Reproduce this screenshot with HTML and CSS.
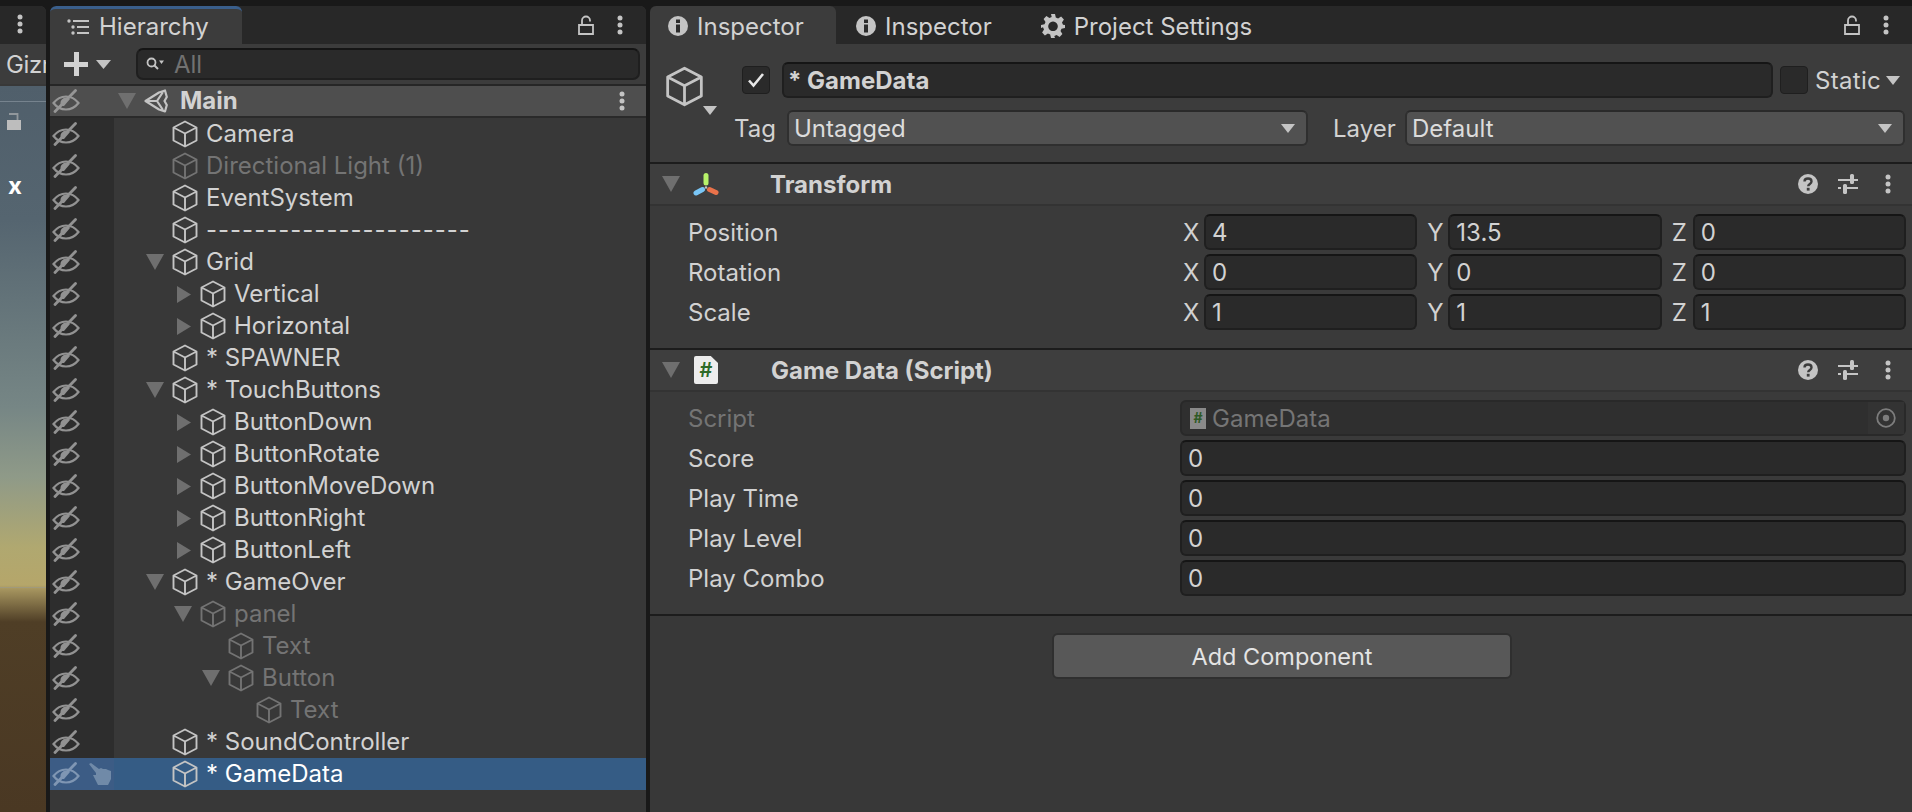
FILE: index.html
```html
<!DOCTYPE html>
<html lang="en">
<head>
<meta charset="utf-8">
<title>Unity Editor</title>
<link rel="stylesheet" href="styles.css">
</head>
<body>
<svg class="defs" width="0" height="0" aria-hidden="true">
  <symbol id="cube" viewBox="0 0 26 28"><path d="M13 1.500 24.500 7.500V20.500L13 26.500 1.500 20.500V7.500ZM1.500 7.500 13 13.500 24.500 7.500M13 13.500V26.500" fill="none" stroke="currentColor" stroke-width="1.900" stroke-linejoin="round"/></symbol>
  <symbol id="eye" viewBox="0 0 28 24"><path d="M1.500 14C5 9.500 9 7.500 14 7.500S23 9.500 26.500 14C23 18.500 19 20.500 14 20.500S5 18.500 1.500 14Z" fill="none" stroke="currentColor" stroke-width="2.200"/><path d="M15 8.500a5.500 5.500 0 0 0-5.500 8.500L12 17 18 10Z" fill="currentColor"/><path d="M3 22.500 23.500 1.500" stroke="currentColor" stroke-width="2.800" stroke-linecap="round"/></symbol>
  <symbol id="dots" viewBox="0 0 6 20"><circle cx="3" cy="3" r="2.500" fill="currentColor"/><circle cx="3" cy="10" r="2.500" fill="currentColor"/><circle cx="3" cy="17" r="2.500" fill="currentColor"/></symbol>
  <symbol id="lock" viewBox="0 0 16 20"><path d="M1 10h14v9H1ZM4 10V5.500C4 3 6 1.500 8 1.500S12 3 12 5.500V6.500" fill="none" stroke="currentColor" stroke-width="1.800"/></symbol>
  <symbol id="lock-solid" viewBox="0 0 14 18"><rect x="0" y="8" width="14" height="10" fill="currentColor"/><path d="M2 2H10.500V8" fill="none" stroke="currentColor" stroke-opacity="0.600" stroke-width="1.800"/></symbol>
  <symbol id="info" viewBox="0 0 20 20"><circle cx="10" cy="10" r="10" fill="currentColor"/><rect x="8" y="8.500" width="4" height="8" fill="#2b2b2b"/><rect x="8" y="3.500" width="4" height="3.500" fill="#2b2b2b"/></symbol>
  <symbol id="help" viewBox="0 0 20 20"><circle cx="10" cy="10" r="10" fill="currentColor"/><path d="M6.500 7.500C6.500 5.500 8 4.500 10 4.500S13.500 5.500 13.500 7.500C13.500 10 10.200 9.800 10.200 12.300" fill="none" stroke="#3c3c3c" stroke-width="2.400"/><rect x="8.800" y="13.800" width="2.800" height="2.800" fill="#3c3c3c"/></symbol>
  <symbol id="sliders" viewBox="0 0 20 20"><path d="M0 6H12M16 6H20M0 14H3M8 14H20" stroke="currentColor" stroke-width="2"/><rect x="12" y="0" width="4" height="10" rx="1.500" fill="currentColor"/><rect x="6" y="10" width="4" height="10" rx="1.500" fill="currentColor" transform="translate(-1)"/></symbol>
  <symbol id="gear" viewBox="0 0 24 24"><path d="M10 0h4l.8 3.500 2.300 1 3-1.900 2.800 2.800-1.900 3 1 2.300L24 11v3l-3.500.8-1 2.300 1.900 3-2.800 2.800-3-1.900-2.300 1L14 24h-4l-.8-3.500-2.300-1-3 1.900-2.800-2.800 1.900-3-1-2.300L0 14v-3l3.500-.8 1-2.300-1.900-3 2.800-2.800 3 1.900 2.300-1ZM12 7.500a4.800 4.800 0 1 0 .01 0Z" fill="currentColor" fill-rule="evenodd"/></symbol>
  <symbol id="unity" viewBox="0 0 24 24"><path d="M1.500 12 15 3.500 21 1.500 22.800 8 20.500 12 22.800 16 21 22.500 15 20.500ZM1.500 12H13M13 12 19 3M13 12 19 21" fill="none" stroke="currentColor" stroke-width="2.200" stroke-linejoin="round"/></symbol>
  <symbol id="down" viewBox="0 0 18 16" preserveAspectRatio="none"><path d="M0 0H18L9 16Z" fill="currentColor"/></symbol>
  <symbol id="right" viewBox="0 0 16 18" preserveAspectRatio="none"><path d="M0 0V18L16 9Z" fill="currentColor"/></symbol>
  <symbol id="hand" viewBox="0 0 24 24"><path d="M1 2 3 1 11 7 13 6 15 7 18 7 20 8 23 9 23 17 20 23 10 23 8 19 5 13 8 13V11Z" fill="currentColor"/></symbol>
  <symbol id="transform" viewBox="0 0 26 23"><path d="M13 2.500V10" stroke="#b7f26a" stroke-width="5" stroke-linecap="round"/><path d="M3 20 9.500 16.500" stroke="#79c6f6" stroke-width="5" stroke-linecap="round"/><path d="M16.500 16.500 23 19.500" stroke="#e9724a" stroke-width="5" stroke-linecap="round"/><circle cx="13" cy="14.500" r="1.200" fill="#c4c4c4"/></symbol>
  <symbol id="target" viewBox="0 0 20 20"><circle cx="10" cy="10" r="8.800" fill="none" stroke="currentColor" stroke-width="1.800"/><circle cx="10" cy="10" r="3.200" fill="currentColor"/></symbol>
  <symbol id="search" viewBox="0 0 18 14"><circle cx="5.500" cy="5.500" r="4" fill="none" stroke="currentColor" stroke-width="1.800"/><path d="M8.500 8.500 12 12" stroke="currentColor" stroke-width="2"/><path d="M13 3.500H18L15.500 7Z" fill="currentColor"/></symbol>
  <symbol id="list" viewBox="0 0 22 16"><circle cx="2" cy="2" r="1.700" fill="currentColor"/><circle cx="6" cy="8" r="1.700" fill="currentColor"/><circle cx="6" cy="14" r="1.700" fill="currentColor"/><path d="M6 2H22M10 8H22M10 14H22" stroke="currentColor" stroke-width="2"/></symbol>
  <symbol id="tick" viewBox="0 0 18 16"><path d="M2 8.500 6.500 13.500 16 2" fill="none" stroke="currentColor" stroke-width="2.600"/></symbol>
</svg>

<div class="editor">
  <section class="panel scene-panel">
    <div class="tabbar tabbar-scene"><svg class="ic-dots"><use href="#dots"/></svg></div>
    <div class="toolbar scene-toolbar"><span class="gizmos">Gizmos</span></div>
    <div class="scene">
      <div class="scene-strip"></div>
      <svg class="scene-lock"><use href="#lock-solid"/></svg>
      <span class="scene-x">x</span>
      <div class="scene-horizon"></div>
    </div>
  </section>

  <section class="panel hierarchy">
    <div class="tabbar">
      <div class="tab tab-hierarchy"><svg class="ic-list"><use href="#list"/></svg><span>Hierarchy</span></div>
      <div class="tab-actions"><svg class="ic-lock"><use href="#lock"/></svg><svg class="ic-dots"><use href="#dots"/></svg></div>
    </div>
    <div class="toolbar hier-toolbar">
      <span class="plus"></span>
      <svg class="ic-caret"><use href="#down"/></svg>
      <div class="search"><svg class="ic-search"><use href="#search"/></svg><span>All</span></div>
    </div>
    <div class="rows">
      <div class="row row-scene"><div class="gutter"><svg class="eye"><use href="#eye"/></svg></div><div class="item d0"><svg class="arrow"><use href="#down"/></svg><svg class="cube"><use href="#unity"/></svg><span class="name name-scene">Main</span><svg class="row-dots"><use href="#dots"/></svg></div></div>
      <div class="row"><div class="gutter"><svg class="eye"><use href="#eye"/></svg></div><div class="item d1"><span class="noarrow"></span><svg class="cube"><use href="#cube"/></svg><span class="name">Camera</span></div></div>
      <div class="row off"><div class="gutter"><svg class="eye"><use href="#eye"/></svg></div><div class="item d1"><span class="noarrow"></span><svg class="cube"><use href="#cube"/></svg><span class="name">Directional Light (1)</span></div></div>
      <div class="row"><div class="gutter"><svg class="eye"><use href="#eye"/></svg></div><div class="item d1"><span class="noarrow"></span><svg class="cube"><use href="#cube"/></svg><span class="name">EventSystem</span></div></div>
      <div class="row"><div class="gutter"><svg class="eye"><use href="#eye"/></svg></div><div class="item d1"><span class="noarrow"></span><svg class="cube"><use href="#cube"/></svg><span class="name name-rule">----------------------</span></div></div>
      <div class="row"><div class="gutter"><svg class="eye"><use href="#eye"/></svg></div><div class="item d1"><svg class="arrow"><use href="#down"/></svg><svg class="cube"><use href="#cube"/></svg><span class="name">Grid</span></div></div>
      <div class="row"><div class="gutter"><svg class="eye"><use href="#eye"/></svg></div><div class="item d2"><svg class="arrow closed"><use href="#right"/></svg><svg class="cube"><use href="#cube"/></svg><span class="name">Vertical</span></div></div>
      <div class="row"><div class="gutter"><svg class="eye"><use href="#eye"/></svg></div><div class="item d2"><svg class="arrow closed"><use href="#right"/></svg><svg class="cube"><use href="#cube"/></svg><span class="name">Horizontal</span></div></div>
      <div class="row"><div class="gutter"><svg class="eye"><use href="#eye"/></svg></div><div class="item d1"><span class="noarrow"></span><svg class="cube"><use href="#cube"/></svg><span class="name">* SPAWNER</span></div></div>
      <div class="row"><div class="gutter"><svg class="eye"><use href="#eye"/></svg></div><div class="item d1"><svg class="arrow"><use href="#down"/></svg><svg class="cube"><use href="#cube"/></svg><span class="name">* TouchButtons</span></div></div>
      <div class="row"><div class="gutter"><svg class="eye"><use href="#eye"/></svg></div><div class="item d2"><svg class="arrow closed"><use href="#right"/></svg><svg class="cube"><use href="#cube"/></svg><span class="name">ButtonDown</span></div></div>
      <div class="row"><div class="gutter"><svg class="eye"><use href="#eye"/></svg></div><div class="item d2"><svg class="arrow closed"><use href="#right"/></svg><svg class="cube"><use href="#cube"/></svg><span class="name">ButtonRotate</span></div></div>
      <div class="row"><div class="gutter"><svg class="eye"><use href="#eye"/></svg></div><div class="item d2"><svg class="arrow closed"><use href="#right"/></svg><svg class="cube"><use href="#cube"/></svg><span class="name">ButtonMoveDown</span></div></div>
      <div class="row"><div class="gutter"><svg class="eye"><use href="#eye"/></svg></div><div class="item d2"><svg class="arrow closed"><use href="#right"/></svg><svg class="cube"><use href="#cube"/></svg><span class="name">ButtonRight</span></div></div>
      <div class="row"><div class="gutter"><svg class="eye"><use href="#eye"/></svg></div><div class="item d2"><svg class="arrow closed"><use href="#right"/></svg><svg class="cube"><use href="#cube"/></svg><span class="name">ButtonLeft</span></div></div>
      <div class="row"><div class="gutter"><svg class="eye"><use href="#eye"/></svg></div><div class="item d1"><svg class="arrow"><use href="#down"/></svg><svg class="cube"><use href="#cube"/></svg><span class="name">* GameOver</span></div></div>
      <div class="row off"><div class="gutter"><svg class="eye"><use href="#eye"/></svg></div><div class="item d2"><svg class="arrow"><use href="#down"/></svg><svg class="cube"><use href="#cube"/></svg><span class="name">panel</span></div></div>
      <div class="row off"><div class="gutter"><svg class="eye"><use href="#eye"/></svg></div><div class="item d3"><span class="noarrow"></span><svg class="cube"><use href="#cube"/></svg><span class="name">Text</span></div></div>
      <div class="row off"><div class="gutter"><svg class="eye"><use href="#eye"/></svg></div><div class="item d3"><svg class="arrow"><use href="#down"/></svg><svg class="cube"><use href="#cube"/></svg><span class="name">Button</span></div></div>
      <div class="row off"><div class="gutter"><svg class="eye"><use href="#eye"/></svg></div><div class="item d4"><span class="noarrow"></span><svg class="cube"><use href="#cube"/></svg><span class="name">Text</span></div></div>
      <div class="row"><div class="gutter"><svg class="eye"><use href="#eye"/></svg></div><div class="item d1"><span class="noarrow"></span><svg class="cube"><use href="#cube"/></svg><span class="name">* SoundController</span></div></div>
      <div class="row selected"><div class="gutter"><svg class="eye"><use href="#eye"/></svg><svg class="hand"><use href="#hand"/></svg></div><div class="item d1"><span class="noarrow"></span><svg class="cube"><use href="#cube"/></svg><span class="name">* GameData</span></div></div>
    </div>
  </section>

  <section class="panel inspector">
    <div class="tabbar">
      <div class="tab tab-inspector"><svg class="ic-info"><use href="#info"/></svg><span>Inspector</span></div>
      <div class="tab tab-plain"><svg class="ic-info"><use href="#info"/></svg><span>Inspector</span></div>
      <div class="tab tab-plain tab-settings"><svg class="ic-gear"><use href="#gear"/></svg><span>Project Settings</span></div>
      <div class="tab-actions"><svg class="ic-lock"><use href="#lock"/></svg><svg class="ic-dots"><use href="#dots"/></svg></div>
    </div>

    <div class="object-head">
      <div class="object-icon"><svg class="object-cube"><use href="#cube"/></svg><svg class="object-caret"><use href="#down"/></svg></div>
      <div class="object-fields">
        <div class="object-line">
          <span class="check"><svg class="ic-tick"><use href="#tick"/></svg></span>
          <div class="name-field">* GameData</div>
          <span class="check static-check"></span>
          <span class="static-label">Static</span>
          <svg class="static-caret"><use href="#down"/></svg>
        </div>
        <div class="object-line tag-line">
          <span class="tag-label">Tag</span>
          <div class="dropdown tag-drop"><span>Untagged</span><svg class="drop-caret"><use href="#down"/></svg></div>
          <span class="layer-label">Layer</span>
          <div class="dropdown layer-drop"><span>Default</span><svg class="drop-caret"><use href="#down"/></svg></div>
        </div>
      </div>
    </div>

    <div class="comp-head">
      <svg class="arrow comp-arrow"><use href="#down"/></svg>
      <svg class="comp-icon"><use href="#transform"/></svg>
      <span class="comp-title">Transform</span>
      <div class="comp-actions"><svg class="ic-help"><use href="#help"/></svg><svg class="ic-sliders"><use href="#sliders"/></svg><svg class="ic-dots"><use href="#dots"/></svg></div>
    </div>
    <div class="comp-body">
      <div class="prop">
        <span class="prop-label">Position</span>
        <div class="vector">
          <div class="axis"><span>X</span><div class="field">4</div></div>
          <div class="axis"><span>Y</span><div class="field">13.5</div></div>
          <div class="axis"><span>Z</span><div class="field">0</div></div>
        </div>
      </div>
      <div class="prop">
        <span class="prop-label">Rotation</span>
        <div class="vector">
          <div class="axis"><span>X</span><div class="field">0</div></div>
          <div class="axis"><span>Y</span><div class="field">0</div></div>
          <div class="axis"><span>Z</span><div class="field">0</div></div>
        </div>
      </div>
      <div class="prop">
        <span class="prop-label">Scale</span>
        <div class="vector">
          <div class="axis"><span>X</span><div class="field">1</div></div>
          <div class="axis"><span>Y</span><div class="field">1</div></div>
          <div class="axis"><span>Z</span><div class="field">1</div></div>
        </div>
      </div>
    </div>

    <div class="comp-head">
      <svg class="arrow comp-arrow"><use href="#down"/></svg>
      <span class="script-icon"><span>#</span></span>
      <span class="comp-title comp-title-script">Game Data (Script)</span>
      <div class="comp-actions"><svg class="ic-help"><use href="#help"/></svg><svg class="ic-sliders"><use href="#sliders"/></svg><svg class="ic-dots"><use href="#dots"/></svg></div>
    </div>
    <div class="comp-body">
      <div class="prop prop-off">
        <span class="prop-label">Script</span>
        <div class="field field-wide field-ref"><span class="script-mini"><span>#</span></span><span class="ref-name">GameData</span><span class="ref-target"><svg class="ic-target"><use href="#target"/></svg></span></div>
      </div>
      <div class="prop"><span class="prop-label">Score</span><div class="field field-wide">0</div></div>
      <div class="prop"><span class="prop-label">Play Time</span><div class="field field-wide">0</div></div>
      <div class="prop"><span class="prop-label">Play Level</span><div class="field field-wide">0</div></div>
      <div class="prop"><span class="prop-label">Play Combo</span><div class="field field-wide">0</div></div>
    </div>

    <div class="add-wrap"><div class="add-button">Add Component</div></div>
  </section>
</div>
</body>
</html>
```

FILE: styles.css
```css
* { box-sizing: border-box; }
html, body { margin: 0; height: 100%; }
body {
  background: #191919;
  color: #d2d2d2;
  font-family: Inter, "Liberation Sans", sans-serif;
  font-size: 24px;
  overflow: hidden;
}
.defs { position: absolute; }
svg { display: block; flex: none; }

.editor {
  display: flex;
  gap: 4px;
  height: 812px;
  padding-top: 6px;
}
.panel {
  display: flex;
  flex-direction: column;
  background: #383838;
  border-radius: 6px 6px 0 0;
  overflow: hidden;
}
.scene-panel { width: 46px; border-top-left-radius: 0; }
.hierarchy { width: 596px; }
.inspector { flex: 1; border-top-right-radius: 0; background: #383838; }

.tabbar {
  display: flex;
  align-items: stretch;
  height: 38px;
  background: #282828;
  flex: none;
}
.tabbar-scene { justify-content: center; padding-top: 8px; padding-right: 6px; }
.tab {
  display: flex;
  align-items: center;
}
.tab-hierarchy {
  width: 192px;
  background: #3c3c3c;
  border-top: 3px solid #3a5f8c;
  border-radius: 6px 6px 0 0;
  padding: 0 0 0 17px;
}
.tab-hierarchy span { margin-left: 10px; }
.tab-inspector {
  width: 186px;
  background: #3c3c3c;
  border-radius: 6px 6px 0 0;
  padding-left: 18px;
  padding-top: 2px;
}
.tab-plain { padding-left: 20px; padding-top: 2px; }
.tab-inspector span { margin-left: 9px; }
.tab-plain span { margin-left: 9px; }
.tab-settings { padding-left: 49px; }
.tab-actions {
  margin-left: auto;
  display: flex;
  align-items: center;
  gap: 23px;
  padding-right: 23px;
}
.ic-dots { width: 6px; height: 20px; color: #c4c4c4; }
.ic-lock { width: 16px; height: 20px; color: #c4c4c4; }
.ic-list { width: 22px; height: 16px; color: #c4c4c4; }
.ic-info { width: 20px; height: 20px; color: #c4c4c4; }
.ic-gear { width: 24px; height: 24px; color: #c4c4c4; }

.toolbar {
  display: flex;
  align-items: center;
  height: 40px;
  background: #3c3c3c;
  flex: none;
}
.scene-toolbar { padding-left: 6px; overflow: hidden; white-space: nowrap; }
.gizmos { letter-spacing: -0.4px; }
.hier-toolbar { padding-left: 14px; }
.plus {
  width: 24px;
  height: 24px;
  background:
    linear-gradient(#d2d2d2, #d2d2d2) center / 100% 5px no-repeat,
    linear-gradient(#d2d2d2, #d2d2d2) center / 5px 100% no-repeat;
}
.ic-caret { width: 15px; height: 9px; margin-left: 8px; color: #c4c4c4; }
.search {
  display: flex;
  align-items: center;
  width: 504px;
  height: 32px;
  margin-left: 25px;
  background: #2a2a2a;
  border: 2px solid #1f1f1f;
  border-top-color: #151515;
  border-radius: 7px;
  padding-left: 8px;
  color: #717171;
}
.search span { margin-left: 10px; }
.ic-search { width: 18px; height: 14px; color: #c4c4c4; }

.scene {
  position: relative;
  flex: 1;
  margin-top: 2px;
  background: linear-gradient(#505f6b 0, #556570 134px, #768685 321px, #8f9a88 391px, #b0a870 461px, #b5a66a 499px, #a6955f 503px, #4f3e26 536px, #4a3823 726px);
}
.scene-strip { height: 16px; border-bottom: 1px solid #76838e; }
.scene-lock { position: absolute; left: 7px; top: 26px; width: 14px; height: 18px; color: #bdbdbd; }
.scene-x { position: absolute; left: 8px; top: 85px; color: #fff; font-weight: 700; }
.scene-horizon { position: absolute; left: 0; right: 0; top: 501px; height: 1px; background: #a09a7c; }

.rows { flex: 1; background: #383838; border-top: 2px solid #262626; }
.row { display: flex; height: 32px; }
.gutter {
  display: flex;
  align-items: center;
  width: 64px;
  padding-left: 2px;
  background: #2d2d2d;
  flex: none;
}
.eye { width: 28px; height: 24px; color: #929292; }
.item {
  display: flex;
  align-items: center;
  flex: 1;
  min-width: 0;
}
.d0 { padding-left: 4px; }
.d1 { padding-left: 32px; }
.d2 { padding-left: 60px; }
.d3 { padding-left: 88px; }
.d4 { padding-left: 116px; }
.arrow { width: 18px; height: 16px; color: #6f6f6f; margin-right: 8px; }
.arrow.closed { width: 14px; height: 17px; margin: 0 9px 0 3px; }
.noarrow { width: 26px; flex: none; }
.cube { width: 26px; height: 28px; color: #c4c4c4; margin-right: 8px; }
.d0 .cube { width: 24px; height: 24px; margin: 0 12px 0 0; }
.name { white-space: nowrap; padding-bottom: 2px; }
.name-rule { letter-spacing: 1px; }
.row-scene { height: 32px; border-bottom: 2px solid #2a2a2a; }
.row-scene .gutter, .row-scene .item { background: #4e4e4e; }
.row-scene .name { font-weight: 700; }
.row-scene .eye { color: #969696; }
.row-dots { width: 6px; height: 20px; margin-left: auto; margin-right: 21px; color: #c4c4c4; }
.off .name { color: #747474; }
.off .cube { color: #737373; }
.selected .item { background: #355c85; color: #fff; }
.selected .gutter { background: #3c5c85; }
.selected .eye { color: #7f96b3; }
.hand { width: 24px; height: 24px; margin-left: 8px; color: #708aa8; }

.object-head {
  display: flex;
  height: 120px;
  background: #3c3c3c;
  flex: none;
  border-bottom: 2px solid #1c1c1c;
}
.object-icon { position: relative; width: 84px; padding: 22px 0 0 15px; }
.object-cube { width: 39px; height: 41px; color: #c4c4c4; }
.object-caret { position: absolute; left: 53px; top: 62px; width: 14px; height: 9px; color: #c4c4c4; }
.object-fields { flex: 1; padding-top: 18px; }
.object-line { display: flex; align-items: center; height: 36px; }
.check {
  display: flex;
  align-items: center;
  justify-content: center;
  width: 28px;
  height: 28px;
  margin-left: 8px;
  background: #2a2a2a;
  border: 1px solid #1f1f1f;
  border-radius: 4px;
  color: #e6e6e6;
  flex: none;
}
.ic-tick { width: 18px; height: 16px; }
.name-field {
  width: 991px;
  height: 36px;
  margin-left: 12px;
  padding: 0 4px;
  background: #2a2a2a;
  border: 2px solid #1f1f1f;
  border-top-color: #151515;
  border-radius: 6px;
  line-height: 34px;
  font-weight: 700;
}
.static-check { margin-left: 7px; }
.static-label { margin-left: 7px; letter-spacing: 0.3px; }
.static-caret { width: 14px; height: 9px; margin-left: 5px; color: #c4c4c4; }
.tag-line { margin-top: 12px; }
.tag-label { width: 53px; }
.dropdown {
  display: flex;
  align-items: center;
  justify-content: space-between;
  height: 36px;
  padding: 0 7px 0 5px;
  background: #515151;
  border: 2px solid #2f2f2f;
  border-top-color: #2a2a2a;
  border-radius: 6px;
  color: #dcdcdc;
}
.drop-caret { width: 14px; height: 9px; margin-right: 4px; color: #c4c4c4; }
.tag-drop { width: 521px; }
.layer-label { margin-left: 25px; width: 72px; }
.layer-drop { width: 500px; }

.comp-head {
  display: flex;
  align-items: center;
  height: 42px;
  background: #3e3e3e;
  border-bottom: 2px solid #333;
  padding-left: 12px;
  flex: none;
}
.comp-arrow { margin-right: 13px; }
.comp-icon { width: 26px; height: 23px; }
.comp-title { margin-left: 51px; font-weight: 700; }
.comp-title-script { margin-left: 53px; }
.comp-actions {
  margin-left: auto;
  display: flex;
  align-items: center;
  gap: 20px;
  padding-right: 21px;
}
.comp-actions .ic-dots { margin-left: 7px; }
.ic-help, .ic-sliders { width: 20px; height: 20px; color: #c4c4c4; }

.comp-body {
  display: flex;
  flex-direction: column;
  gap: 4px;
  padding: 8px 6px 18px 0;
  border-bottom: 2px solid #1c1c1c;
  flex: none;
  background: #3a3a3a;
}
.prop { display: flex; align-items: center; height: 36px; }
.prop-label { width: 530px; padding-left: 38px; flex: none; }
.prop-off .prop-label { color: #747474; }
.vector {
  flex: 1;
  display: grid;
  grid-template-columns: repeat(3, 1fr);
  gap: 10px;
  padding-left: 3px;
}
.axis { display: flex; align-items: center; }
.axis > span { width: 21px; flex: none; }
.field {
  flex: 1;
  min-width: 0;
  height: 36px;
  padding: 0 6px;
  background: #2a2a2a;
  border: 2px solid #1f1f1f;
  border-top-color: #151515;
  border-radius: 6px;
  line-height: 33px;
}
.field-wide { width: 100%; }
.field-ref {
  display: flex;
  align-items: center;
  padding-left: 8px;
  background: #2f2f2f;
  border-color: #292929;
  color: #757575;
  line-height: normal;
}
.script-mini {
  display: flex;
  align-items: center;
  justify-content: center;
  width: 16px;
  height: 21px;
  background: #8a8a8a;
  flex: none;
}
.script-mini span { color: #2e5a26; font-size: 14px; font-weight: 700; line-height: 1; }
.ref-name { margin-left: 6px; }
.ref-target {
  display: flex;
  align-items: center;
  justify-content: center;
  margin-left: auto;
  width: 36px;
  height: 32px;
  margin-right: -6px;
  background: #333;
}
.ic-target { width: 20px; height: 20px; color: #7d7d7d; }
.script-icon {
  display: flex;
  align-items: center;
  justify-content: center;
  width: 24px;
  height: 28px;
  margin-left: 1px;
  background: #ededed;
  clip-path: polygon(0 0, 70% 0, 100% 25%, 100% 100%, 0 100%);
  border-radius: 2px;
}
.script-icon span { color: #2e6a28; font-size: 20px; font-weight: 600; line-height: 1; }

.add-wrap { display: flex; padding: 17px 0 0 402px; flex: none; }
.add-button {
  display: flex;
  align-items: center;
  justify-content: center;
  width: 460px;
  height: 46px;
  background: #585858;
  border: 2px solid #2f2f2f;
  border-radius: 6px;
  color: #e4e4e4;
  font-size: 23.500px;
}
```
